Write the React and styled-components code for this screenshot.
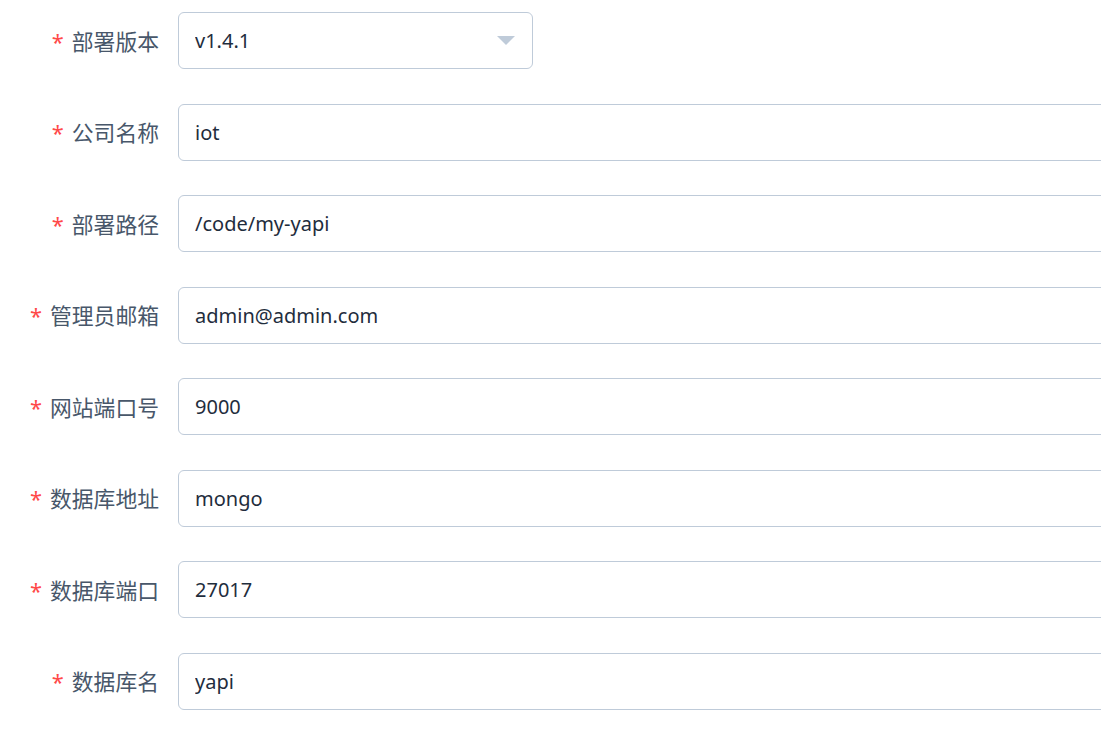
import React from "react";
import styled, { createGlobalStyle } from "styled-components";

const GlobalStyle = createGlobalStyle`
  html, body {
    margin: 0;
    padding: 0;
    overflow: hidden;
    background: #ffffff;
  }
  body {
    font-family: "Noto Sans", "Noto Sans CJK SC", sans-serif;
  }
`;

const Form = styled.form`
  display: flex;
  flex-direction: column;
  gap: 34.57px;
  padding-top: 12px;
  width: 1101px;
  overflow: hidden;
`;

const Row = styled.div`
  display: flex;
  align-items: center;
  height: 57px;
`;

const Label = styled.label`
  flex: 0 0 178px;
  box-sizing: border-box;
  padding-right: 19px;
  text-align: right;
  font-family: "Noto Sans CJK SC", "Noto Sans", sans-serif;
  font-size: 21.8px;
  color: #48576a;
  line-height: 57px;
  white-space: nowrap;

  &::before {
    content: "*";
    color: #ff4949;
    margin-right: 8px;
    font-family: "Noto Sans", sans-serif;
  }
`;

const Field = styled.div`
  position: relative;
  flex: 0 0 ${(p) => p.width}px;
  height: 57px;
  box-sizing: border-box;
  border: 1px solid #bfcbd9;
  border-radius: 6px;
  background: #fff;
  display: flex;
  align-items: center;
`;

const Input = styled.input`
  width: 100%;
  height: 100%;
  border: none;
  outline: none;
  background: transparent;
  padding: 0 16px;
  font-family: "Noto Sans", sans-serif;
  font-size: 20px;
  color: #1f2d3d;
  cursor: ${(p) => (p.readOnly ? "pointer" : "text")};
`;

const Caret = styled.span`
  position: absolute;
  right: 17px;
  top: 23px;
  width: 0;
  height: 0;
  border-left: 9px solid transparent;
  border-right: 9px solid transparent;
  border-top: 9px solid #bfcbd9;
`;

const fields = [
  { label: "公司名称", value: "iot" },
  { label: "部署路径", value: "/code/my-yapi" },
  { label: "管理员邮箱", value: "admin@admin.com" },
  { label: "网站端口号", value: "9000" },
  { label: "数据库地址", value: "mongo" },
  { label: "数据库端口", value: "27017" },
  { label: "数据库名", value: "yapi" },
];

export default function App() {
  return (
    <>
      <GlobalStyle />
      <Form onSubmit={(e) => e.preventDefault()}>
        <Row>
          <Label>部署版本</Label>
          <Field width={355}>
            <Input readOnly defaultValue="v1.4.1" />
            <Caret />
          </Field>
        </Row>
        {fields.map((f) => (
          <Row key={f.label}>
            <Label>{f.label}</Label>
            <Field width={1100}>
              <Input defaultValue={f.value} />
            </Field>
          </Row>
        ))}
      </Form>
    </>
  );
}
